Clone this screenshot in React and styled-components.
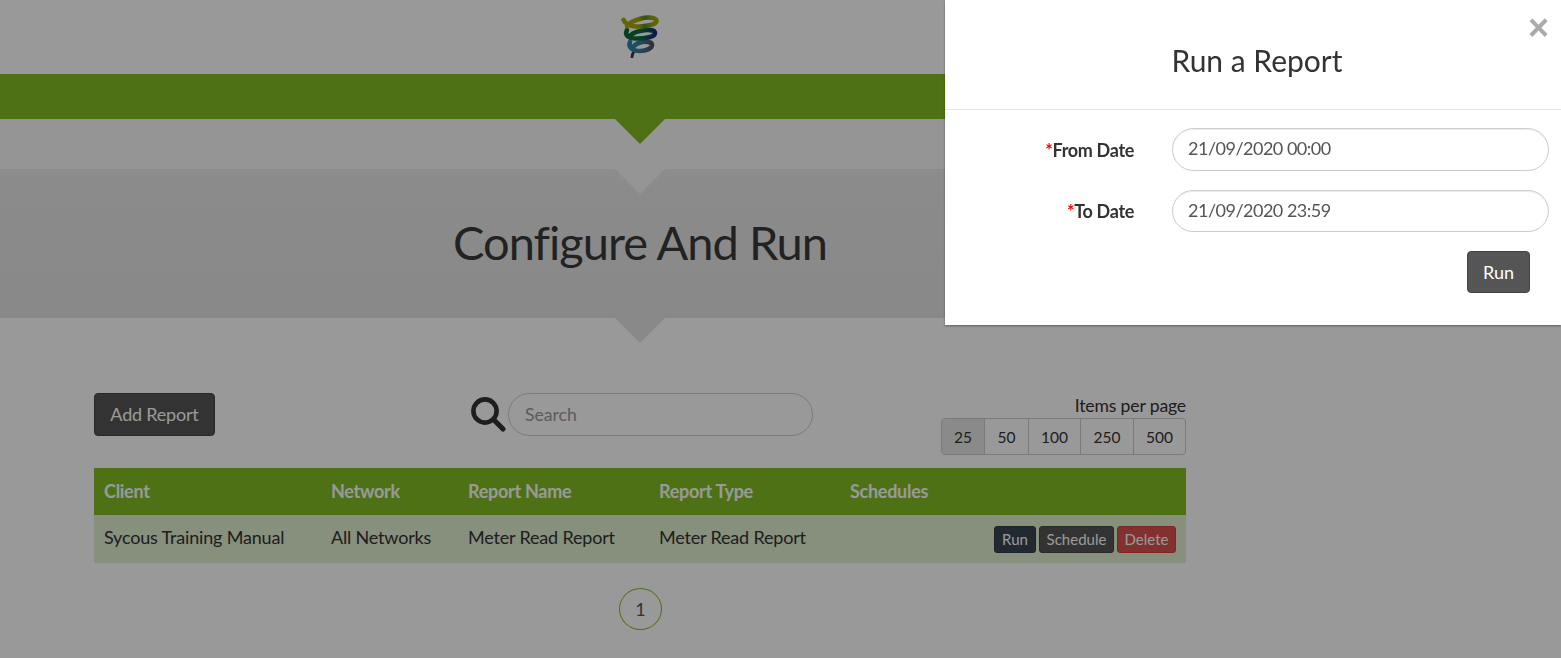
import React from "react";
import styled, { createGlobalStyle } from "styled-components";

const GlobalStyle = createGlobalStyle`
  html, body {
    margin: 0;
    height: 100%;
    overflow: hidden;
    background: #fff;
  }
  body {
    font-family: Lato, "Liberation Sans", sans-serif;
    font-size: 18px;
    color: #333;
  }
  * {
    box-sizing: border-box;
  }
`;

const Logo = () => (
  <LogoSvg viewBox="0 0 40 44" width="40" height="44">
    <defs>
      <linearGradient id="coilA" x1="0" y1="0" x2="1" y2="0">
        <stop offset="0" stopColor="#a8a80a" />
        <stop offset="0.45" stopColor="#a8a80a" />
        <stop offset="0.65" stopColor="#4f8a22" />
        <stop offset="0.85" stopColor="#9aa00e" />
        <stop offset="1" stopColor="#a8a80a" />
      </linearGradient>
      <linearGradient id="coilB" x1="0" y1="0" x2="1" y2="0">
        <stop offset="0" stopColor="#0b6b30" />
        <stop offset="0.5" stopColor="#0f6a48" />
        <stop offset="1" stopColor="#10307a" />
      </linearGradient>
      <linearGradient id="coilC" x1="0" y1="0" x2="1" y2="0">
        <stop offset="0" stopColor="#2b86b4" />
        <stop offset="0.5" stopColor="#3a7a9c" />
        <stop offset="1" stopColor="#555" />
      </linearGradient>
    </defs>
    <path d="M15 37 C 13 38.5 12 41 12 43" fill="none" stroke="#3d3a3d" strokeWidth="2.8" strokeLinecap="round" />
    <path d="M10 28 C 8 33 12 37 20 37 C 27 37 32 34 32 31 C 32 27.5 25 27 20 28.5 C 16 30 13 32 12 35" fill="none" stroke="url(#coilC)" strokeWidth="4.6" strokeLinecap="round" />
    <path d="M7 16 C 4.5 21 8 24.5 16 24.5 C 25 24.5 35 23 35 19 C 35 15.5 27 15.5 20 17 C 15 18 11 20 9.5 23" fill="none" stroke="url(#coilB)" strokeWidth="4.6" strokeLinecap="round" />
    <path d="M3.5 6 C 6 11 12 13 20 12.5 C 29 12 36.5 10 36.5 7 C 36.5 3.5 28 2.5 21 4.5 C 14 6.5 9 9 7 12" fill="none" stroke="url(#coilA)" strokeWidth="4.6" strokeLinecap="round" />
  </LogoSvg>
);

const SearchIcon = () => (
  <SearchSvg viewBox="0 0 36 36" width="36" height="36">
    <circle cx="14" cy="14" r="11.6" fill="none" stroke="#333" strokeWidth="4.6" />
    <path d="M23 23 L32 32" stroke="#333" strokeWidth="5.2" strokeLinecap="round" />
  </SearchSvg>
);

const App = () => {
  const sizes = [
    { label: "25", width: 42 },
    { label: "50", width: 44 },
    { label: "100", width: 52 },
    { label: "250", width: 53 },
    { label: "500", width: 52 },
  ];
  return (
    <>
      <GlobalStyle />
      <Page>
        <LogoBar>
          <Logo />
        </LogoBar>
        <GreenBar />
        <ArrowGap>
          <TitleBand>
            <Title>Configure And Run</Title>
          </TitleBand>
        </ArrowGap>
        <Content>
          <Toolbar>
            <div>
              <DarkBtn>Add Report</DarkBtn>
            </div>
            <SearchGroup>
              <SearchIcon />
              <SearchInput placeholder="Search" />
            </SearchGroup>
            <PerPage>
              <PerPageLabel>Items per page</PerPageLabel>
              <PageSizes>
                {sizes.map((s, i) => (
                  <PageSize key={s.label} $width={s.width} $active={i === 0}>
                    {s.label}
                  </PageSize>
                ))}
              </PageSizes>
            </PerPage>
          </Toolbar>
          <Table>
            <colgroup>
              <col width="227" />
              <col width="137" />
              <col width="191" />
              <col width="191" />
              <col width="346" />
            </colgroup>
            <thead>
              <tr>
                <Th>Client</Th>
                <Th>Network</Th>
                <Th>Report Name</Th>
                <Th>Report Type</Th>
                <Th>Schedules</Th>
              </tr>
            </thead>
            <tbody>
              <tr>
                <Td>Sycous Training Manual</Td>
                <Td>All Networks</Td>
                <Td>Meter Read Report</Td>
                <Td>Meter Read Report</Td>
                <ActionCell>
                  <SmallBtn $kind="run">Run</SmallBtn>
                  <SmallBtn $kind="schedule">Schedule</SmallBtn>
                  <SmallBtn $kind="delete">Delete</SmallBtn>
                </ActionCell>
              </tr>
            </tbody>
          </Table>
          <Pager>
            <PagerItem>1</PagerItem>
          </Pager>
        </Content>
      </Page>
      <Backdrop />
      <Modal>
        <ModalHead>
          <ModalTitle>Run a Report</ModalTitle>
          <CloseBtn>×</CloseBtn>
        </ModalHead>
        <ModalBody>
          <FormRow>
            <FormLabel>
              <Req>*</Req>From Date
            </FormLabel>
            <DateInput defaultValue="21/09/2020 00:00" />
          </FormRow>
          <FormRow>
            <FormLabel>
              <Req>*</Req>To Date
            </FormLabel>
            <DateInput defaultValue="21/09/2020 23:59" />
          </FormRow>
          <ModalActions>
            <RunBtn>Run</RunBtn>
          </ModalActions>
        </ModalBody>
      </Modal>
    </>
  );
};

const Page = styled.div`
  width: 1280px;
  height: 658px;
  overflow: hidden;
`;
const LogoBar = styled.div`
  height: 74px;
  display: flex;
  justify-content: center;
  padding-top: 14px;
`;
const LogoSvg = styled.svg`
  display: block;
  filter: blur(0.4px);
`;
const GreenBar = styled.div`
  position: relative;
  z-index: 1;
  height: 45px;
  background: #82bc23;

  &::after {
    content: "";
    position: absolute;
    left: 50%;
    top: 100%;
    margin-left: -25px;
    border-style: solid;
    border-width: 25px 25px 0;
    border-color: #82bc23 transparent transparent;
  }
`;
const ArrowGap = styled.div`
  padding-top: 50px;
  background: #f8f8f8;
`;
const TitleBand = styled.div`
  position: relative;
  height: 149px;
  padding-bottom: 2px;
  display: flex;
  align-items: center;
  justify-content: center;
  background: linear-gradient(#e9e9e9, #e4e4e4);

  &::before {
    content: "";
    position: absolute;
    left: 50%;
    top: 0;
    margin-left: -25px;
    border-style: solid;
    border-width: 25px 25px 0;
    border-color: #f8f8f8 transparent transparent;
  }
  &::after {
    content: "";
    position: absolute;
    left: 50%;
    top: 100%;
    margin-left: -25px;
    border-style: solid;
    border-width: 25px 25px 0;
    border-color: #e4e4e4 transparent transparent;
  }
`;
const Title = styled.h1`
  margin: 0;
  font-size: 47px;
  font-weight: 400;
  line-height: 1;
  letter-spacing: -0.98px;
  color: #3a3a3a;
`;
const Content = styled.div`
  margin: 75px 94px 0;
`;
const Toolbar = styled.div`
  display: grid;
  grid-template-columns: 377px 342px 1fr;
  height: 62px;
`;
const DarkBtn = styled.button`
  height: 43px;
  width: 121px;
  padding: 0 0 2px;
  border: 1px solid #444;
  border-radius: 4px;
  background: #555;
  color: #fff;
  font: 400 18px Lato, sans-serif;
  letter-spacing: -0.2px;
`;
const SearchGroup = styled.div`
  display: flex;
  height: 43px;
  align-items: center;
`;
const SearchSvg = styled.svg`
  flex: none;
  margin-right: 1px;
`;
const SearchInput = styled.input`
  flex: 1;
  min-width: 0;
  height: 43px;
  padding: 0 16px;
  border: 1px solid #ccc;
  border-radius: 22px;
  background: #fff;
  font: 400 17.6px Lato, sans-serif;
  outline: none;

  &::placeholder {
    color: #999;
  }
`;
const PerPage = styled.div`
  display: flex;
  flex-direction: column;
  align-items: flex-end;
`;
const PerPageLabel = styled.div`
  height: 25px;
  line-height: 26px;
  font-size: 17.6px;
  letter-spacing: -0.15px;
  color: #333;
`;
const PageSizes = styled.div`
  display: flex;
  height: 37px;
  border: 1px solid #ccc;
  border-radius: 4px;
  overflow: hidden;
`;
const PageSize = styled.div`
  width: ${({ $width }) => $width}px;
  display: flex;
  align-items: center;
  justify-content: center;
  font-size: 15.5px;
  color: #333;
  background: ${({ $active }) => ($active ? "#e6e6e6" : "transparent")};

  & + & {
    border-left: 1px solid #ccc;
  }
`;
const Table = styled.table`
  width: 100%;
  margin-top: 13px;
  border-collapse: collapse;
  table-layout: fixed;
`;
const Th = styled.th`
  height: 47px;
  padding: 0 10px 2px;
  text-align: left;
  font-size: 18px;
  font-weight: 700;
  letter-spacing: -0.28px;
  color: #fff;
  background: #82bc23;
`;
const Td = styled.td`
  height: 48px;
  padding: 0 10px 4px;
  font-size: 18px;
  letter-spacing: -0.18px;
  color: #333;
  background: #e2eed0;
`;
const ActionCell = styled(Td)`
  padding: 0 10px;
  text-align: right;
  white-space: nowrap;
  letter-spacing: normal;
`;
const btnKinds = {
  run: { bg: "#3a4652", border: "#2f3a45", width: 42 },
  schedule: { bg: "#555", border: "#444", width: 75 },
  delete: { bg: "#d9534f", border: "#d43f3a", width: 59 },
};
const SmallBtn = styled.button`
  width: ${({ $kind }) => btnKinds[$kind].width}px;
  height: 27px;
  margin-left: 3px;
  padding: 0;
  border: 1px solid ${({ $kind }) => btnKinds[$kind].border};
  border-radius: 3px;
  background: ${({ $kind }) => btnKinds[$kind].bg};
  color: #fff;
  font: 400 15px Lato, sans-serif;
`;
const Pager = styled.div`
  display: flex;
  justify-content: center;
  margin-top: 25px;
`;
const PagerItem = styled.div`
  width: 43px;
  height: 42px;
  padding-left: 1px;
  display: flex;
  align-items: center;
  justify-content: center;
  border: 1px solid #82bc23;
  border-radius: 50%;
  font-size: 18px;
  color: #555;
`;
const Backdrop = styled.div`
  position: fixed;
  inset: 0;
  z-index: 10;
  background: rgba(0, 0, 0, 0.4);
`;
const Modal = styled.div`
  position: fixed;
  top: 0;
  right: 0;
  z-index: 11;
  width: 616px;
  height: 325px;
  background: #fff;
  box-shadow: 0 1px 2px rgba(0, 0, 0, 0.4);
`;
const ModalHead = styled.div`
  position: relative;
  height: 110px;
  padding-top: 40px;
  padding-left: 8px;
  border-bottom: 1px solid #e5e5e5;
  text-align: center;
`;
const ModalTitle = styled.h4`
  margin: 0;
  font-size: 30px;
  font-weight: 400;
  line-height: 40px;
  color: #333;
`;
const CloseBtn = styled.button`
  position: absolute;
  top: 8px;
  right: 12px;
  padding: 0;
  border: 0;
  background: none;
  font: 700 36px/40px "Liberation Sans", sans-serif;
  color: #aaa;
`;
const ModalBody = styled.div`
  padding: 18px 12px 0 0;
`;
const FormRow = styled.div`
  display: flex;
  align-items: center;
  margin-bottom: 19px;
`;
const FormLabel = styled.label`
  width: 189px;
  padding-top: 1px;
  text-align: right;
  margin-right: 38px;
  font-size: 18px;
  font-weight: 700;
  letter-spacing: -0.33px;
  color: #333;
`;
const Req = styled.span`
  color: #f00;
`;
const DateInput = styled.input`
  flex: 1;
  min-width: 0;
  height: 42.5px;
  padding: 0 15px 2px;
  border: 1px solid #ccc;
  border-radius: 22px;
  box-shadow: inset 0 1px 1px rgba(0, 0, 0, 0.075);
  font: 400 18px Lato, sans-serif;
  letter-spacing: -0.5px;
  color: #555;
  outline: none;
`;
const ModalActions = styled.div`
  display: flex;
  justify-content: flex-end;
  padding-right: 19px;
`;
const RunBtn = styled.button`
  width: 63px;
  height: 42px;
  padding: 0;
  border: 1px solid #444;
  border-radius: 4px;
  background: #555;
  color: #fff;
  font: 400 18px Lato, sans-serif;
`;

export default App;
